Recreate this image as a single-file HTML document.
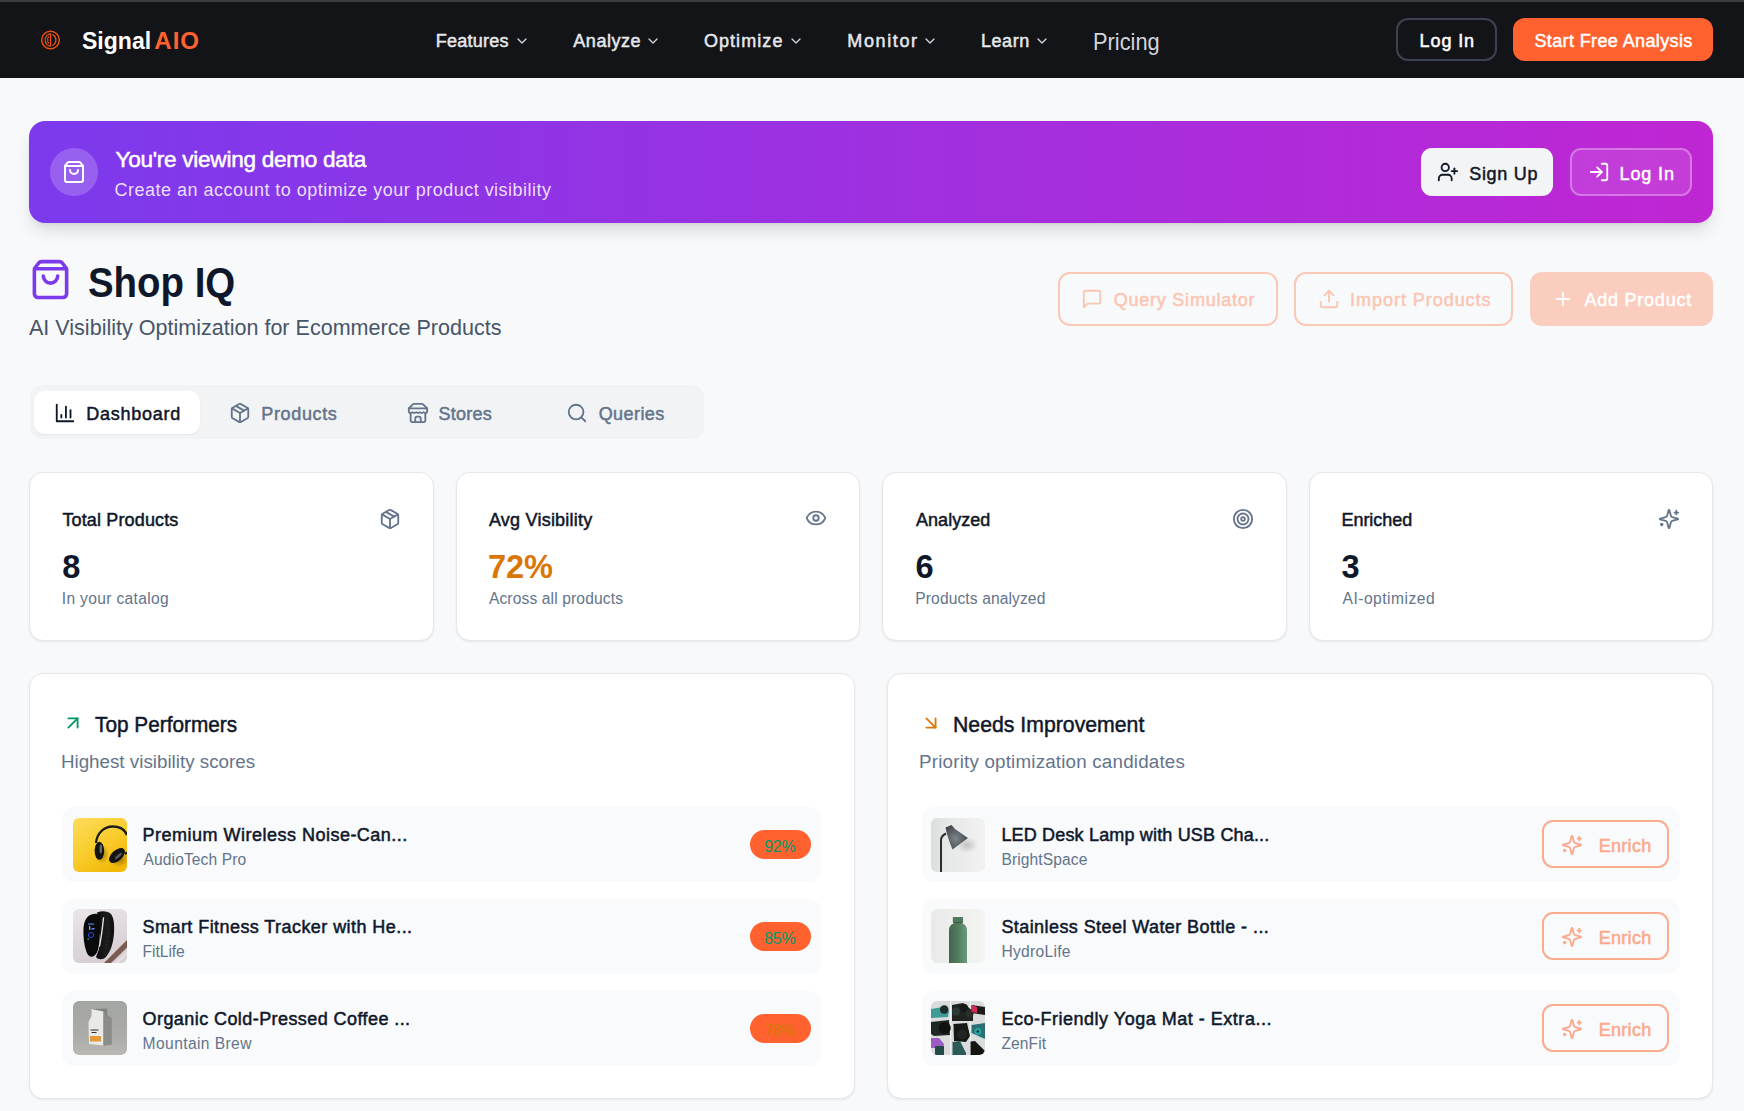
<!DOCTYPE html>
<html><head><meta charset="utf-8"><title>Shop IQ</title>
<style>
html,body{margin:0;padding:0;}
body{width:1744px;height:1111px;overflow:hidden;position:relative;background:#f8f9fb;font-family:"Liberation Sans",sans-serif;}
.b{position:absolute;}
.i{position:absolute;overflow:visible;}
.t{position:absolute;white-space:pre;font-family:"Liberation Sans",sans-serif;}
</style></head><body>
<div class="b" style="left:0px;top:0px;width:1744px;height:78px;background:#131418"></div>
<div class="b" style="left:0px;top:0px;width:1744px;height:2px;background:#3d3d3d"></div>
<svg class="i" style="left:40px;top:30px" width="21" height="21" viewBox="0 0 21 21" fill="none" stroke="#ea4f12" stroke-width="1.5" stroke-linecap="round" stroke-linejoin="round"><circle cx="10.5" cy="10" r="8.8"/><path d="M10.6 3.9 C7.8 3.9 5.1 6.4 5.1 10 C5.1 13.6 7.8 16.1 10.6 16.1 Z" stroke-width="1.3"/><path d="M9 6.8 C7.6 7.4 7.3 8.8 8 10 C7.3 11.2 7.6 12.6 9 13.2" stroke-width="1.1"/><path d="M12.9 4.7 C15.2 6.1 15.9 8 15.9 10 C15.9 12 15.2 13.9 12.9 15.3" stroke-width="1.3"/></svg>
<svg class="i" style="left:514.17px;top:33px" width="16" height="16" viewBox="0 0 24 24" fill="none" stroke="#d1d5db" stroke-width="2" stroke-linecap="round" stroke-linejoin="round"><path d="m6 9 6 6 6-6"/></svg>
<svg class="i" style="left:645.27px;top:33px" width="16" height="16" viewBox="0 0 24 24" fill="none" stroke="#d1d5db" stroke-width="2" stroke-linecap="round" stroke-linejoin="round"><path d="m6 9 6 6 6-6"/></svg>
<svg class="i" style="left:788.0699999999999px;top:33px" width="16" height="16" viewBox="0 0 24 24" fill="none" stroke="#d1d5db" stroke-width="2" stroke-linecap="round" stroke-linejoin="round"><path d="m6 9 6 6 6-6"/></svg>
<svg class="i" style="left:921.87px;top:33px" width="16" height="16" viewBox="0 0 24 24" fill="none" stroke="#d1d5db" stroke-width="2" stroke-linecap="round" stroke-linejoin="round"><path d="m6 9 6 6 6-6"/></svg>
<svg class="i" style="left:1034.3700000000001px;top:33px" width="16" height="16" viewBox="0 0 24 24" fill="none" stroke="#d1d5db" stroke-width="2" stroke-linecap="round" stroke-linejoin="round"><path d="m6 9 6 6 6-6"/></svg>
<div class="b" style="left:1396px;top:18px;width:100.5px;height:42.5px;border:2px solid #3b4250;border-radius:12px;box-sizing:border-box"></div>
<div class="b" style="left:1513px;top:18px;width:200px;height:43px;background:#ff622e;border-radius:12px"></div>
<div class="b" style="left:29px;top:121px;width:1684px;height:102px;border-radius:16px;background:linear-gradient(90deg,#7c3aed 0%,#c026d3 100%);box-shadow:0 10px 18px -3px rgba(0,0,0,.13),0 4px 6px -4px rgba(0,0,0,.1)"></div>
<div class="b" style="left:50px;top:148px;width:48px;height:48px;border-radius:50%;background:rgba(255,255,255,.2)"></div>
<svg class="i" style="left:62px;top:160px" width="24" height="24" viewBox="0 0 24 24" fill="none" stroke="#ffffff" stroke-width="2" stroke-linecap="round" stroke-linejoin="round"><path d="M16 10a4 4 0 0 1-8 0"/><path d="M3.103 6.034h17.794"/><path d="M3.4 5.467a2 2 0 0 0-.4 1.2V20a2 2 0 0 0 2 2h14a2 2 0 0 0 2-2V6.667a2 2 0 0 0-.4-1.2l-2-2.667A2 2 0 0 0 17 2H7a2 2 0 0 0-1.6.8z"/></svg>
<div class="b" style="left:1421px;top:148px;width:132px;height:48px;background:#f3f4f6;border-radius:11px"></div>
<svg class="i" style="left:1437.1px;top:161.4px" width="22" height="22" viewBox="0 0 24 24" fill="none" stroke="#111827" stroke-width="2" stroke-linecap="round" stroke-linejoin="round"><path d="M16 21v-2a4 4 0 0 0-4-4H6a4 4 0 0 0-4 4v2"/><circle cx="9" cy="7" r="4"/><line x1="19" x2="19" y1="8" y2="14"/><line x1="22" x2="16" y1="11" y2="11"/></svg>
<div class="b" style="left:1569.5px;top:148px;width:122.5px;height:48px;background:rgba(255,255,255,.1);border:2px solid rgba(255,255,255,.3);border-radius:11px;box-sizing:border-box"></div>
<svg class="i" style="left:1588px;top:161px" width="22" height="22" viewBox="0 0 24 24" fill="none" stroke="#ffffff" stroke-width="2" stroke-linecap="round" stroke-linejoin="round"><path d="M15 3h4a2 2 0 0 1 2 2v14a2 2 0 0 1-2 2h-4"/><polyline points="10 17 15 12 10 7"/><line x1="15" x2="3" y1="12" y2="12"/></svg>
<svg class="i" style="left:29px;top:258px" width="43" height="43" viewBox="0 0 24 24" fill="none" stroke="#7c3aed" stroke-width="2" stroke-linecap="round" stroke-linejoin="round"><path d="M16 10a4 4 0 0 1-8 0"/><path d="M3.103 6.034h17.794"/><path d="M3.4 5.467a2 2 0 0 0-.4 1.2V20a2 2 0 0 0 2 2h14a2 2 0 0 0 2-2V6.667a2 2 0 0 0-.4-1.2l-2-2.667A2 2 0 0 0 17 2H7a2 2 0 0 0-1.6.8z"/></svg>
<div class="b" style="left:1058px;top:272px;width:220px;height:54px;border:2px solid #fcc8b6;border-radius:12px;box-sizing:border-box"></div>
<svg class="i" style="left:1081.2px;top:288px" width="22" height="22" viewBox="0 0 24 24" fill="none" stroke="#fbc5b1" stroke-width="2" stroke-linecap="round" stroke-linejoin="round"><path d="M21 15a2 2 0 0 1-2 2H7l-4 4V5a2 2 0 0 1 2-2h14a2 2 0 0 1 2 2z"/></svg>
<div class="b" style="left:1294.4px;top:272px;width:218.89999999999986px;height:54px;border:2px solid #fcc8b6;border-radius:12px;box-sizing:border-box"></div>
<svg class="i" style="left:1317.8px;top:288px" width="22" height="22" viewBox="0 0 24 24" fill="none" stroke="#fbc5b1" stroke-width="2" stroke-linecap="round" stroke-linejoin="round"><path d="M21 15v4a2 2 0 0 1-2 2H5a2 2 0 0 1-2-2v-4"/><polyline points="17 8 12 3 7 8"/><line x1="12" x2="12" y1="3" y2="15"/></svg>
<div class="b" style="left:1529.7px;top:272px;width:183.29999999999995px;height:54px;background:#facdbe;border-radius:12px"></div>
<svg class="i" style="left:1551.8px;top:288px" width="22" height="22" viewBox="0 0 24 24" fill="none" stroke="#ffffff" stroke-width="2" stroke-linecap="round" stroke-linejoin="round"><path d="M5 12h14"/><path d="M12 5v14"/></svg>
<div class="b" style="left:29.5px;top:385px;width:674.5px;height:54px;background:#f1f3f5;border-radius:12px"></div>
<div class="b" style="left:34px;top:391px;width:166px;height:43px;background:#ffffff;border-radius:10px;box-shadow:0 1px 2px rgba(0,0,0,.06)"></div>
<svg class="i" style="left:53.7px;top:402.4px" width="22" height="22" viewBox="0 0 24 24" fill="none" stroke="#0f172a" stroke-width="2" stroke-linecap="round" stroke-linejoin="round"><path d="M3 3v18h18"/><path d="M18 17V9"/><path d="M13 17V5"/><path d="M8 17v-3"/></svg>
<svg class="i" style="left:229.2px;top:402px" width="22" height="22" viewBox="0 0 24 24" fill="none" stroke="#64748b" stroke-width="2" stroke-linecap="round" stroke-linejoin="round"><path d="M11 21.73a2 2 0 0 0 2 0l7-4A2 2 0 0 0 21 16V8a2 2 0 0 0-1-1.73l-7-4a2 2 0 0 0-2 0l-7 4A2 2 0 0 0 3 8v8a2 2 0 0 0 1 1.73z"/><path d="M12 22V12"/><polyline points="3.29 7 12 12 20.71 7"/><path d="m7.5 4.27 9 5.15"/></svg>
<svg class="i" style="left:406.9px;top:402.1px" width="22" height="22" viewBox="0 0 24 24" fill="none" stroke="#64748b" stroke-width="2" stroke-linecap="round" stroke-linejoin="round"><path d="m2 7 4.41-4.41A2 2 0 0 1 7.83 2h8.34a2 2 0 0 1 1.42.59L22 7"/><path d="M4 12v8a2 2 0 0 0 2 2h12a2 2 0 0 0 2-2v-8"/><path d="M15 22v-4a2 2 0 0 0-2-2h-2a2 2 0 0 0-2 2v4"/><path d="M2 7h20"/><path d="M22 7v3a2 2 0 0 1-2 2a2.7 2.7 0 0 1-1.59-.63.7.7 0 0 0-.82 0A2.7 2.7 0 0 1 16 12a2.7 2.7 0 0 1-1.59-.63.7.7 0 0 0-.82 0A2.7 2.7 0 0 1 12 12a2.7 2.7 0 0 1-1.59-.63.7.7 0 0 0-.82 0A2.7 2.7 0 0 1 8 12a2.7 2.7 0 0 1-1.59-.63.7.7 0 0 0-.82 0A2.7 2.7 0 0 1 4 12a2 2 0 0 1-2-2V7"/></svg>
<svg class="i" style="left:565.8px;top:402px" width="22" height="22" viewBox="0 0 24 24" fill="none" stroke="#64748b" stroke-width="2" stroke-linecap="round" stroke-linejoin="round"><circle cx="11" cy="11" r="8"/><path d="m21 21-4.3-4.3"/></svg>
<div class="b" style="left:29.2px;top:472.4px;width:404.45px;height:168.60000000000002px;background:#fff;border:1px solid #e5e7eb;border-radius:14px;box-sizing:border-box;box-shadow:0 1px 3px rgba(0,0,0,.06),0 1px 2px -1px rgba(0,0,0,.06)"></div>
<div class="b" style="left:455.65px;top:472.4px;width:404.44999999999993px;height:168.60000000000002px;background:#fff;border:1px solid #e5e7eb;border-radius:14px;box-sizing:border-box;box-shadow:0 1px 3px rgba(0,0,0,.06),0 1px 2px -1px rgba(0,0,0,.06)"></div>
<div class="b" style="left:882.1px;top:472.4px;width:404.44999999999993px;height:168.60000000000002px;background:#fff;border:1px solid #e5e7eb;border-radius:14px;box-sizing:border-box;box-shadow:0 1px 3px rgba(0,0,0,.06),0 1px 2px -1px rgba(0,0,0,.06)"></div>
<div class="b" style="left:1308.55px;top:472.4px;width:404.45000000000005px;height:168.60000000000002px;background:#fff;border:1px solid #e5e7eb;border-radius:14px;box-sizing:border-box;box-shadow:0 1px 3px rgba(0,0,0,.06),0 1px 2px -1px rgba(0,0,0,.06)"></div>
<svg class="i" style="left:379px;top:507.7px" width="22" height="22" viewBox="0 0 24 24" fill="none" stroke="#64748b" stroke-width="2" stroke-linecap="round" stroke-linejoin="round"><path d="M11 21.73a2 2 0 0 0 2 0l7-4A2 2 0 0 0 21 16V8a2 2 0 0 0-1-1.73l-7-4a2 2 0 0 0-2 0l-7 4A2 2 0 0 0 3 8v8a2 2 0 0 0 1 1.73z"/><path d="M12 22V12"/><polyline points="3.29 7 12 12 20.71 7"/><path d="m7.5 4.27 9 5.15"/></svg>
<svg class="i" style="left:805px;top:507.4px" width="22" height="22" viewBox="0 0 24 24" fill="none" stroke="#64748b" stroke-width="2" stroke-linecap="round" stroke-linejoin="round"><path d="M2.062 12.348a1 1 0 0 1 0-.696 10.75 10.75 0 0 1 19.876 0 1 1 0 0 1 0 .696 10.75 10.75 0 0 1-19.876 0"/><circle cx="12" cy="12" r="3"/></svg>
<svg class="i" style="left:1232px;top:508px" width="22" height="22" viewBox="0 0 24 24" fill="none" stroke="#64748b" stroke-width="2" stroke-linecap="round" stroke-linejoin="round"><circle cx="12" cy="12" r="10"/><circle cx="12" cy="12" r="6"/><circle cx="12" cy="12" r="2"/></svg>
<svg class="i" style="left:1657.8px;top:507.8px" width="22" height="22" viewBox="0 0 24 24" fill="none" stroke="#64748b" stroke-width="2" stroke-linecap="round" stroke-linejoin="round"><path d="M9.937 15.5A2 2 0 0 0 8.5 14.063l-6.135-1.582a.5.5 0 0 1 0-.962L8.5 9.936A2 2 0 0 0 9.937 8.5l1.582-6.135a.5.5 0 0 1 .963 0L14.063 8.5A2 2 0 0 0 15.5 9.937l6.135 1.581a.5.5 0 0 1 0 .964L15.5 14.063a2 2 0 0 0-1.437 1.437l-1.582 6.135a.5.5 0 0 1-.963 0z"/><path d="M20 3v4"/><path d="M22 5h-4"/><path d="M4 17v2"/><path d="M5 18H3"/></svg>
<div class="b" style="left:29.2px;top:673.4px;width:825.9px;height:425.4px;background:#fff;border:1px solid #e5e7eb;border-radius:14px;box-sizing:border-box;box-shadow:0 1px 3px rgba(0,0,0,.06),0 1px 2px -1px rgba(0,0,0,.06)"></div>
<div class="b" style="left:887.1px;top:673.4px;width:825.9px;height:425.4px;background:#fff;border:1px solid #e5e7eb;border-radius:14px;box-sizing:border-box;box-shadow:0 1px 3px rgba(0,0,0,.06),0 1px 2px -1px rgba(0,0,0,.06)"></div>
<svg class="i" style="left:62px;top:711.6px" width="22" height="22" viewBox="0 0 24 24" fill="none" stroke="#059669" stroke-width="2" stroke-linecap="round" stroke-linejoin="round"><path d="M7 7h10v10"/><path d="M7 17 17 7"/></svg>
<svg class="i" style="left:920px;top:712.3px" width="22" height="22" viewBox="0 0 24 24" fill="none" stroke="#d97706" stroke-width="2" stroke-linecap="round" stroke-linejoin="round"><path d="m7 7 10 10"/><path d="M17 7v10H7"/></svg>
<div class="b" style="left:62.2px;top:806.8px;width:758.5999999999999px;height:75.0px;background:#f8fafc;border-radius:12px"></div>
<div class="b" style="left:921.6px;top:806.8px;width:758.6px;height:75.0px;background:#f8fafc;border-radius:12px"></div>
<div class="b" style="left:73px;top:818px;width:54px;height:54px;border-radius:6px;overflow:hidden"><svg width="54" height="54" viewBox="0 0 54 54"><defs><linearGradient id="h1" x1="0" y1="0" x2="0.6" y2="1"><stop offset="0" stop-color="#fddc5c"/><stop offset="0.6" stop-color="#f9cc2c"/><stop offset="1" stop-color="#f2b90a"/></linearGradient><radialGradient id="h2" cx="0.5" cy="0.5" r="0.5"><stop offset="0" stop-color="#000" stop-opacity=".35"/><stop offset="1" stop-color="#000" stop-opacity="0"/></radialGradient></defs><rect width="54" height="54" fill="url(#h1)"/><ellipse cx="29" cy="36" rx="7" ry="10" fill="url(#h2)"/><ellipse cx="46" cy="41" rx="10" ry="8" fill="url(#h2)"/><path d="M23 25 C24 15 31 8.5 40 8.5 C47 8.5 52 12 54 17" fill="none" stroke="#1c1c1c" stroke-width="2.4"/><path d="M52 36 L54 34.5" stroke="#1c1c1c" stroke-width="2.4"/><ellipse cx="26.4" cy="32.8" rx="4.8" ry="9" fill="#141414"/><ellipse cx="27.8" cy="31" rx="1.3" ry="4.5" fill="#6a6a6a"/><ellipse cx="44" cy="37.5" rx="9.5" ry="5.4" fill="#141414" transform="rotate(-42 44 37.5)"/><ellipse cx="45.5" cy="38" rx="4.5" ry="1.2" fill="#5a5a5a" transform="rotate(-42 45.5 38)"/></svg></div>
<div class="b" style="left:931px;top:818px;width:54px;height:54px;border-radius:6px;overflow:hidden"><svg width="54" height="54" viewBox="0 0 54 54"><defs><linearGradient id="l1" x1="0" y1="0" x2="1" y2="0"><stop offset="0" stop-color="#dcdddd"/><stop offset=".3" stop-color="#e6e7e7"/><stop offset="1" stop-color="#f2f2f2"/></linearGradient><radialGradient id="l2" cx="0.5" cy="0.5" r="0.5"><stop offset="0" stop-color="#000" stop-opacity=".18"/><stop offset="1" stop-color="#000" stop-opacity="0"/></radialGradient><radialGradient id="l3" cx="0.45" cy="0.55" r="0.6"><stop offset="0" stop-color="#7d8589"/><stop offset="1" stop-color="#3f4446"/></radialGradient></defs><rect width="54" height="54" fill="url(#l1)"/><ellipse cx="36" cy="27" rx="11" ry="8" fill="url(#l2)"/><path d="M10 54 L10 22 C10 19 12 17 15 15.5" stroke="#2b2d2e" stroke-width="2" fill="none"/><path d="M14.5 9.5 L20.5 7 L24 11 L37 20 L21.5 31.5 L18.5 24 L16 16 Z" fill="url(#l3)"/></svg></div>
<div class="b" style="left:750px;top:830px;width:61px;height:29px;background:#ff622e;border-radius:15px"></div>
<div class="b" style="left:1542.4px;top:820px;width:126.19999999999982px;height:48px;border:2px solid #fcab8f;border-radius:11px;box-sizing:border-box"></div>
<svg class="i" style="left:1560.9px;top:834px" width="22" height="22" viewBox="0 0 24 24" fill="none" stroke="#fca88b" stroke-width="2" stroke-linecap="round" stroke-linejoin="round"><path d="M9.937 15.5A2 2 0 0 0 8.5 14.063l-6.135-1.582a.5.5 0 0 1 0-.962L8.5 9.936A2 2 0 0 0 9.937 8.5l1.582-6.135a.5.5 0 0 1 .963 0L14.063 8.5A2 2 0 0 0 15.5 9.937l6.135 1.581a.5.5 0 0 1 0 .964L15.5 14.063a2 2 0 0 0-1.437 1.437l-1.582 6.135a.5.5 0 0 1-.963 0z"/><path d="M20 3v4"/><path d="M22 5h-4"/><path d="M4 17v2"/><path d="M5 18H3"/></svg>
<div class="b" style="left:62.2px;top:898.8px;width:758.5999999999999px;height:75.0px;background:#f8fafc;border-radius:12px"></div>
<div class="b" style="left:921.6px;top:898.8px;width:758.6px;height:75.0px;background:#f8fafc;border-radius:12px"></div>
<div class="b" style="left:73px;top:909.3px;width:54px;height:54px;border-radius:6px;overflow:hidden"><svg width="54" height="54" viewBox="0 0 54 54"><defs><linearGradient id="f1" x1="0" y1="0" x2="0.3" y2="1"><stop offset="0" stop-color="#ebe6ea"/><stop offset="1" stop-color="#d6ced2"/></linearGradient><linearGradient id="f2" x1="0" y1="0" x2="1" y2="0"><stop offset="0" stop-color="#0c0c0c"/><stop offset=".6" stop-color="#1d1d1d"/><stop offset="1" stop-color="#0e0e0e"/></linearGradient></defs><rect width="54" height="54" fill="url(#f1)"/><path d="M31 54 L54 31 L54 38.5 L38 54 Z" fill="#7b5a50"/><path d="M40.5 54 L54 42 L54 47 L46 54 Z" fill="#e3dcdf"/><path d="M24 3.5 C29 1.5 35 2 38 5 C41 9 41.5 16 41 24 C40.5 33 38 42 33 48 C30 51 25 51 23 48 L26 40 C27 30 28 18 24 3.5 Z" fill="url(#f2)"/><path d="M15 7.5 C19 4 23.5 4 26 6 C28 9 27.5 20 26.5 30 C26 38 25 44 21 47 C18 49 15 47 13.5 43 C11 36 10 27 10.5 19 C11 13 12.5 10 15 7.5 Z" fill="#0a0a0a"/><path d="M30.5 9 C29.5 18 28.5 28 26.5 37" stroke="#e8e3e6" stroke-width="1.4" fill="none" stroke-linecap="round"/><circle cx="35.5" cy="12" r=".7" fill="#333"/><circle cx="36" cy="16" r=".7" fill="#333"/><circle cx="36" cy="20" r=".7" fill="#333"/><circle cx="35.8" cy="24" r=".7" fill="#333"/><circle cx="35.3" cy="28" r=".7" fill="#333"/><circle cx="34.5" cy="32" r=".7" fill="#333"/><circle cx="33.5" cy="36" r=".7" fill="#333"/><rect x="15" y="14.5" width="6" height="1.1" fill="#5b8cff"/><rect x="16" y="17" width="1.3" height="4" fill="#7aa4ff"/><rect x="18.5" y="19" width="3" height="1.5" fill="#5b8cff"/><circle cx="18" cy="26" r="2.6" fill="none" stroke="#2f4fff" stroke-width=".9"/><rect x="14.5" y="29.5" width="1.5" height="1.3" fill="#2fae5a"/></svg></div>
<div class="b" style="left:931px;top:909.3px;width:54px;height:54px;border-radius:6px;overflow:hidden"><svg width="54" height="54" viewBox="0 0 54 54"><defs><linearGradient id="b1" x1="0" y1="0" x2="1" y2="0"><stop offset="0" stop-color="#e9e9e8"/><stop offset="1" stop-color="#f4f4f2"/></linearGradient><linearGradient id="b2" x1="0" y1="0" x2="1" y2="0"><stop offset="0" stop-color="#46644f"/><stop offset=".45" stop-color="#4f7a5c"/><stop offset="1" stop-color="#6a9a7d"/></linearGradient></defs><rect width="54" height="54" fill="url(#b1)"/><rect x="21.8" y="8" width="10.3" height="6" rx="1" fill="#4f7a5e"/><rect x="22.5" y="13.5" width="9" height="1.2" fill="#2a3a30"/><path d="M22 14.7 L32 14.7 C34.5 16 36 18 36 21 L36 54 L18 54 L18 21 C18 18 19.5 16 22 14.7 Z" fill="url(#b2)"/></svg></div>
<div class="b" style="left:750px;top:922px;width:61px;height:29px;background:#ff622e;border-radius:15px"></div>
<div class="b" style="left:1542.4px;top:912px;width:126.19999999999982px;height:48px;border:2px solid #fcab8f;border-radius:11px;box-sizing:border-box"></div>
<svg class="i" style="left:1560.9px;top:926px" width="22" height="22" viewBox="0 0 24 24" fill="none" stroke="#fca88b" stroke-width="2" stroke-linecap="round" stroke-linejoin="round"><path d="M9.937 15.5A2 2 0 0 0 8.5 14.063l-6.135-1.582a.5.5 0 0 1 0-.962L8.5 9.936A2 2 0 0 0 9.937 8.5l1.582-6.135a.5.5 0 0 1 .963 0L14.063 8.5A2 2 0 0 0 15.5 9.937l6.135 1.581a.5.5 0 0 1 0 .964L15.5 14.063a2 2 0 0 0-1.437 1.437l-1.582 6.135a.5.5 0 0 1-.963 0z"/><path d="M20 3v4"/><path d="M22 5h-4"/><path d="M4 17v2"/><path d="M5 18H3"/></svg>
<div class="b" style="left:62.2px;top:990.8px;width:758.5999999999999px;height:75.0px;background:#f8fafc;border-radius:12px"></div>
<div class="b" style="left:921.6px;top:990.8px;width:758.6px;height:75.0px;background:#f8fafc;border-radius:12px"></div>
<div class="b" style="left:73px;top:1000.9px;width:54px;height:54px;border-radius:6px;overflow:hidden"><svg width="54" height="54" viewBox="0 0 54 54"><defs><linearGradient id="c1" x1="0" y1="0" x2="0" y2="1"><stop offset="0" stop-color="#a3a5a2"/><stop offset=".7" stop-color="#acadaa"/><stop offset="1" stop-color="#bbb8b3"/></linearGradient></defs><rect width="54" height="54" fill="url(#c1)"/><path d="M18.5 8 L34 7.5 L34.5 15 L38.5 17 L38.5 43.5 L30.5 44.5 Z" fill="#7f8381"/><path d="M18.5 8 L30.5 10.5 L30.5 44.5 L16 43 L15.5 21 L18.5 15 Z" fill="#e9e9e7"/><path d="M30.5 11 L34 14 L38.5 17 L38.5 43.5 L30.5 44.5 Z" fill="#8a8d8a"/><rect x="17" y="35" width="11" height="5.5" fill="#e39a3d"/><path d="M17.5 29 h8 M18.5 31.5 h5" stroke="#333" stroke-width="1"/></svg></div>
<div class="b" style="left:931px;top:1000.9px;width:54px;height:54px;border-radius:6px;overflow:hidden"><svg width="54" height="54" viewBox="0 0 54 54"><rect width="54" height="54" fill="#d9dbdc"/><path d="M19.6 0v54M39.3 0v54" stroke="#f2f2f2" stroke-width="1.2"/><path d="M0 8 L12 6 L18 10 L17 16 L0 17 Z" fill="#3e9c98"/><circle cx="13.2" cy="8.5" r="4.3" fill="#1d2b2a"/><path d="M21 4 L32 2 L42 10 L42 20 L21 20 Z" fill="#1f2420"/><circle cx="25" cy="10.5" r="4" fill="#2c3a36"/><circle cx="33" cy="7" r="4.2" fill="#161a17"/><circle cx="38.5" cy="12.5" r="4" fill="#2a2f2b"/><path d="M40.5 4 L54 6 L54 14 L40.5 12 Z" fill="#1c1c1a"/><path d="M40.5 4 L46 6 L46 12 L40.5 11 Z" fill="#d42a56"/><path d="M0 21 L18 19 L19 34 L3 35 L0 33 Z" fill="#1d2826"/><circle cx="13.8" cy="27" r="6" fill="#0f120f"/><path d="M22.5 23 L36 22 L39 35 L35 41 L23 40 Z" fill="#161915"/><circle cx="31" cy="33.5" r="5" fill="#222622"/><path d="M40.5 24 L54 22 L54 38 L40.5 32 Z" fill="#2a6f75"/><circle cx="46.8" cy="30.5" r="3.5" fill="#25a3a3"/><circle cx="46.8" cy="30.5" r="1.2" fill="#0d2c2c"/><path d="M0 37 L8 37 L13 43 L12 47 L0 47 Z" fill="#9b5cc4"/><path d="M4 45 L13 45 L13 54 L4 54 Z" fill="#244a48"/><path d="M21.5 41 L29 40 L35 52 L35 54 L21.5 54 Z" fill="#2b5a58"/><path d="M39.5 40.5 L44 40 L54 50 L54 54 L39.5 54 Z" fill="#151614"/></svg></div>
<div class="b" style="left:750px;top:1014px;width:61px;height:29px;background:#ff622e;border-radius:15px"></div>
<div class="b" style="left:1542.4px;top:1004px;width:126.19999999999982px;height:48px;border:2px solid #fcab8f;border-radius:11px;box-sizing:border-box"></div>
<svg class="i" style="left:1560.9px;top:1018px" width="22" height="22" viewBox="0 0 24 24" fill="none" stroke="#fca88b" stroke-width="2" stroke-linecap="round" stroke-linejoin="round"><path d="M9.937 15.5A2 2 0 0 0 8.5 14.063l-6.135-1.582a.5.5 0 0 1 0-.962L8.5 9.936A2 2 0 0 0 9.937 8.5l1.582-6.135a.5.5 0 0 1 .963 0L14.063 8.5A2 2 0 0 0 15.5 9.937l6.135 1.581a.5.5 0 0 1 0 .964L15.5 14.063a2 2 0 0 0-1.437 1.437l-1.582 6.135a.5.5 0 0 1-.963 0z"/><path d="M20 3v4"/><path d="M22 5h-4"/><path d="M4 17v2"/><path d="M5 18H3"/></svg>
<div class="t" style="left:81.84px;top:29.00px;font-size:24.0px;line-height:24.0px;font-weight:700;letter-spacing:0.0px;transform:scaleX(0.9594);transform-origin:0 0;color:#ffffff">Signal</div>
<div class="t" style="left:154.30px;top:29.00px;font-size:24.0px;line-height:24.0px;font-weight:700;letter-spacing:1.0px;color:#ff622e">AIO</div>
<div class="t" style="left:435.70px;top:32.00px;font-size:18.0px;line-height:18.0px;font-weight:400;-webkit-text-stroke:0.5px #e5e7eb;letter-spacing:0.258px;color:#e5e7eb">Features</div>
<div class="t" style="left:573.30px;top:31.99px;font-size:18.0px;line-height:18.0px;font-weight:400;-webkit-text-stroke:0.5px #e5e7eb;letter-spacing:0.534px;color:#e5e7eb">Analyze</div>
<div class="t" style="left:703.90px;top:31.99px;font-size:18.0px;line-height:18.0px;font-weight:400;-webkit-text-stroke:0.5px #e5e7eb;letter-spacing:1.071px;color:#e5e7eb">Optimize</div>
<div class="t" style="left:847.30px;top:32.00px;font-size:18.0px;line-height:18.0px;font-weight:400;-webkit-text-stroke:0.5px #e5e7eb;letter-spacing:1.633px;color:#e5e7eb">Monitor</div>
<div class="t" style="left:981.00px;top:32.00px;font-size:18.0px;line-height:18.0px;font-weight:400;-webkit-text-stroke:0.5px #e5e7eb;letter-spacing:0.55px;color:#e5e7eb">Learn</div>
<div class="t" style="left:1092.74px;top:30.50px;font-size:23.4px;line-height:23.4px;font-weight:400;letter-spacing:0.0px;transform:scaleX(0.9324);transform-origin:0 0;color:#d1d5db">Pricing</div>
<div class="t" style="left:1419.60px;top:32.00px;font-size:18.0px;line-height:18.0px;font-weight:400;-webkit-text-stroke:0.5px #ffffff;letter-spacing:0.88px;color:#ffffff">Log In</div>
<div class="t" style="left:1534.40px;top:31.97px;font-size:18.0px;line-height:18.0px;font-weight:400;-webkit-text-stroke:0.5px #ffffff;letter-spacing:0.384px;color:#ffffff">Start Free Analysis</div>
<div class="t" style="left:115.50px;top:148.54px;font-size:22.6px;line-height:22.6px;font-weight:400;-webkit-text-stroke:0.5px #ffffff;letter-spacing:-0.283px;color:#ffffff">You're viewing demo data</div>
<div class="t" style="left:114.50px;top:181.00px;font-size:18.0px;line-height:18.0px;font-weight:400;letter-spacing:0.487px;color:rgba(255,255,255,0.85)">Create an account to optimize your product visibility</div>
<div class="t" style="left:1469.20px;top:164.97px;font-size:18.0px;line-height:18.0px;font-weight:400;-webkit-text-stroke:0.5px #111827;letter-spacing:0.701px;color:#111827">Sign Up</div>
<div class="t" style="left:1619.50px;top:165.00px;font-size:18.0px;line-height:18.0px;font-weight:400;-webkit-text-stroke:0.5px #ffffff;letter-spacing:0.88px;color:#ffffff">Log In</div>
<div class="t" style="left:88.39px;top:262.00px;font-size:42.0px;line-height:42.0px;font-weight:700;letter-spacing:0.0px;transform:scaleX(0.9146);transform-origin:0 0;color:#0f172a">Shop IQ</div>
<div class="t" style="left:29.40px;top:316.50px;font-size:22.6px;line-height:22.6px;font-weight:400;letter-spacing:0.0px;transform:scaleX(0.9533);transform-origin:0 0;color:#475569">AI Visibility Optimization for Ecommerce Products</div>
<div class="t" style="left:1113.70px;top:290.99px;font-size:18.0px;line-height:18.0px;font-weight:400;-webkit-text-stroke:0.5px #fbc5b1;letter-spacing:0.771px;color:#fbc5b1">Query Simulator</div>
<div class="t" style="left:1350.10px;top:290.99px;font-size:18.0px;line-height:18.0px;font-weight:400;-webkit-text-stroke:0.5px #fbc5b1;letter-spacing:0.957px;color:#fbc5b1">Import Products</div>
<div class="t" style="left:1584.50px;top:290.99px;font-size:18.0px;line-height:18.0px;font-weight:400;-webkit-text-stroke:0.5px #ffffff;letter-spacing:0.76px;color:#ffffff">Add Product</div>
<div class="t" style="left:86.30px;top:405.00px;font-size:18.0px;line-height:18.0px;font-weight:400;-webkit-text-stroke:0.5px #0f172a;letter-spacing:0.725px;color:#0f172a">Dashboard</div>
<div class="t" style="left:261.30px;top:405.00px;font-size:18.0px;line-height:18.0px;font-weight:400;-webkit-text-stroke:0.5px #64748b;letter-spacing:0.643px;color:#64748b">Products</div>
<div class="t" style="left:438.60px;top:404.97px;font-size:18.0px;line-height:18.0px;font-weight:400;-webkit-text-stroke:0.5px #64748b;letter-spacing:0.22px;color:#64748b">Stores</div>
<div class="t" style="left:598.70px;top:405.00px;font-size:18.0px;line-height:18.0px;font-weight:400;-webkit-text-stroke:0.5px #64748b;letter-spacing:0.433px;color:#64748b">Queries</div>
<div class="t" style="left:62.40px;top:511.00px;font-size:18.0px;line-height:18.0px;font-weight:400;-webkit-text-stroke:0.5px #0f172a;letter-spacing:0.146px;color:#0f172a">Total Products</div>
<div class="t" style="left:488.90px;top:510.99px;font-size:18.0px;line-height:18.0px;font-weight:400;-webkit-text-stroke:0.5px #0f172a;letter-spacing:0.231px;color:#0f172a">Avg Visibility</div>
<div class="t" style="left:916.00px;top:510.99px;font-size:18.0px;line-height:18.0px;font-weight:400;-webkit-text-stroke:0.5px #0f172a;letter-spacing:0.042px;color:#0f172a">Analyzed</div>
<div class="t" style="left:1341.50px;top:511.00px;font-size:18.0px;line-height:18.0px;font-weight:400;-webkit-text-stroke:0.5px #0f172a;letter-spacing:-0.056px;color:#0f172a">Enriched</div>
<div class="t" style="left:62.20px;top:550.95px;font-size:32.6px;line-height:32.6px;font-weight:700;letter-spacing:0.0px;color:#0f172a">8</div>
<div class="t" style="left:487.90px;top:550.95px;font-size:32.6px;line-height:32.6px;font-weight:700;letter-spacing:-0.05px;color:#d97706">72%</div>
<div class="t" style="left:915.60px;top:550.95px;font-size:32.6px;line-height:32.6px;font-weight:700;letter-spacing:0.0px;color:#0f172a">6</div>
<div class="t" style="left:1341.50px;top:550.95px;font-size:32.6px;line-height:32.6px;font-weight:700;letter-spacing:0.0px;color:#0f172a">3</div>
<div class="t" style="left:61.80px;top:590.50px;font-size:15.6px;line-height:15.6px;font-weight:400;letter-spacing:0.328px;color:#64748b">In your catalog</div>
<div class="t" style="left:488.90px;top:590.50px;font-size:15.6px;line-height:15.6px;font-weight:400;letter-spacing:0.128px;color:#64748b">Across all products</div>
<div class="t" style="left:915.30px;top:590.50px;font-size:15.6px;line-height:15.6px;font-weight:400;letter-spacing:0.107px;color:#64748b">Products analyzed</div>
<div class="t" style="left:1342.50px;top:590.50px;font-size:15.6px;line-height:15.6px;font-weight:400;letter-spacing:0.5px;color:#64748b">AI-optimized</div>
<div class="t" style="left:95.10px;top:713.50px;font-size:22.6px;line-height:22.6px;font-weight:400;-webkit-text-stroke:0.5px #0f172a;letter-spacing:0.0px;transform:scaleX(0.9201);transform-origin:0 0;color:#0f172a">Top Performers</div>
<div class="t" style="left:60.90px;top:753.00px;font-size:18.8px;line-height:18.8px;font-weight:400;letter-spacing:0.003px;color:#64748b">Highest visibility scores</div>
<div class="t" style="left:952.52px;top:713.50px;font-size:22.6px;line-height:22.6px;font-weight:400;-webkit-text-stroke:0.5px #0f172a;letter-spacing:0.0px;transform:scaleX(0.9406);transform-origin:0 0;color:#0f172a">Needs Improvement</div>
<div class="t" style="left:919.10px;top:753.00px;font-size:18.8px;line-height:18.8px;font-weight:400;letter-spacing:0.187px;color:#64748b">Priority optimization candidates</div>
<div class="t" style="left:142.60px;top:826.00px;font-size:18.0px;line-height:18.0px;font-weight:400;-webkit-text-stroke:0.5px #0f172a;letter-spacing:0.489px;color:#0f172a">Premium Wireless Noise-Can...</div>
<div class="t" style="left:143.60px;top:851.50px;font-size:15.6px;line-height:15.6px;font-weight:400;letter-spacing:0.091px;color:#64748b">AudioTech Pro</div>
<div class="t" style="left:764.30px;top:838.50px;font-size:16.0px;line-height:16.0px;font-weight:400;letter-spacing:-0.35px;color:#059669">92%</div>
<div class="t" style="left:142.60px;top:917.97px;font-size:18.0px;line-height:18.0px;font-weight:400;-webkit-text-stroke:0.5px #0f172a;letter-spacing:0.433px;color:#0f172a">Smart Fitness Tracker with He...</div>
<div class="t" style="left:142.60px;top:943.50px;font-size:15.6px;line-height:15.6px;font-weight:400;letter-spacing:-0.051px;color:#64748b">FitLife</div>
<div class="t" style="left:764.30px;top:930.50px;font-size:16.0px;line-height:16.0px;font-weight:400;letter-spacing:-0.35px;color:#059669">85%</div>
<div class="t" style="left:142.60px;top:1009.99px;font-size:18.0px;line-height:18.0px;font-weight:400;-webkit-text-stroke:0.5px #0f172a;letter-spacing:0.424px;color:#0f172a">Organic Cold-Pressed Coffee ...</div>
<div class="t" style="left:142.60px;top:1035.50px;font-size:15.6px;line-height:15.6px;font-weight:400;letter-spacing:0.4px;color:#64748b">Mountain Brew</div>
<div class="t" style="left:764.30px;top:1022.50px;font-size:16.0px;line-height:16.0px;font-weight:400;letter-spacing:-0.35px;color:#d97706">78%</div>
<div class="t" style="left:1001.40px;top:826.00px;font-size:18.0px;line-height:18.0px;font-weight:400;-webkit-text-stroke:0.5px #0f172a;letter-spacing:0.171px;color:#0f172a">LED Desk Lamp with USB Cha...</div>
<div class="t" style="left:1001.40px;top:851.50px;font-size:15.6px;line-height:15.6px;font-weight:400;letter-spacing:0.1px;color:#64748b">BrightSpace</div>
<div class="t" style="left:1598.70px;top:837.00px;font-size:18.0px;line-height:18.0px;font-weight:400;-webkit-text-stroke:0.5px #fca88b;letter-spacing:0.3px;color:#fca88b">Enrich</div>
<div class="t" style="left:1001.40px;top:917.97px;font-size:18.0px;line-height:18.0px;font-weight:400;-webkit-text-stroke:0.5px #0f172a;letter-spacing:0.424px;color:#0f172a">Stainless Steel Water Bottle - ...</div>
<div class="t" style="left:1001.40px;top:943.50px;font-size:15.6px;line-height:15.6px;font-weight:400;letter-spacing:0.3px;color:#64748b">HydroLife</div>
<div class="t" style="left:1598.70px;top:929.00px;font-size:18.0px;line-height:18.0px;font-weight:400;-webkit-text-stroke:0.5px #fca88b;letter-spacing:0.3px;color:#fca88b">Enrich</div>
<div class="t" style="left:1001.40px;top:1010.00px;font-size:18.0px;line-height:18.0px;font-weight:400;-webkit-text-stroke:0.5px #0f172a;letter-spacing:0.514px;color:#0f172a">Eco-Friendly Yoga Mat - Extra...</div>
<div class="t" style="left:1001.40px;top:1035.50px;font-size:15.6px;line-height:15.6px;font-weight:400;letter-spacing:0.12px;color:#64748b">ZenFit</div>
<div class="t" style="left:1598.70px;top:1021.00px;font-size:18.0px;line-height:18.0px;font-weight:400;-webkit-text-stroke:0.5px #fca88b;letter-spacing:0.3px;color:#fca88b">Enrich</div>
</body></html>
